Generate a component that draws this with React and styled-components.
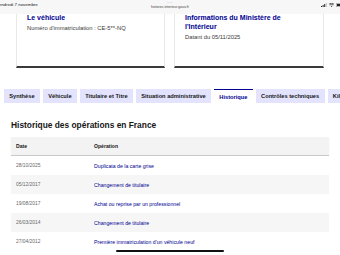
import React from "react";
import styled, { createGlobalStyle } from "styled-components";

const GlobalStyle = createGlobalStyle`
  html, body {
    margin: 0;
    padding: 0;
    background: #ffffff;
  }
  body {
    font-family: "Liberation Sans", Arial, sans-serif;
    color: #161616;
    width: 340px;
    height: 255px;
    overflow: hidden;
  }
`;

const Screen = styled.div`
  position: relative;
  width: 340px;
  height: 255px;
  overflow: hidden;
  background: #ffffff;
`;

const StatusBar = styled.div`
  display: grid;
  grid-template-columns: 1fr auto 1fr;
  align-items: start;
  height: 14px;
  background: #f7f7f7;
`;

const DateText = styled.span`
  font-size: 4.4px;
  margin: 2px 0 0 -4px;
  color: #222;
  white-space: nowrap;
`;

const Address = styled.div`
  display: flex;
  flex-direction: column;
  align-items: center;
  color: #444;
  line-height: 1;
`;

const Dots = styled.span`
  font-size: 5px;
  letter-spacing: 0.3px;
  color: #888;
`;

const Url = styled.span`
  font-size: 3.6px;
  margin-top: 1px;
`;

const StatusIcons = styled.div`
  display: flex;
  justify-content: flex-end;
  align-items: center;
  gap: 2px;
  margin: 3px -4px 0 0;
`;

const CardRow = styled.div`
  display: flex;
  gap: 9px;
  padding: 0 16px;
`;

const Card = styled.div`
  flex: 0 0 ${(p) => p.$w}px;
  height: 54px;
  padding: 0 10px;
  box-sizing: border-box;
  border-left: 1px solid #e8e8e8;
  border-right: 1px solid #e8e8e8;
  border-bottom: 2px solid #3a3a3a;
`;

const CardTitle = styled.div`
  font-size: 7px;
  font-weight: 700;
  line-height: 9px;
  color: #000091;
  margin-top: -1px;
`;

const CardDesc = styled.div`
  font-size: 5.8px;
  line-height: 7px;
  color: #3a3a3a;
  margin-top: ${(p) => p.$mt}px;
`;

const TabList = styled.div`
  display: flex;
  gap: 3px;
  padding-left: 4px;
  margin-top: 21px;
  white-space: nowrap;
  overflow: hidden;
`;

const Tab = styled.div`
  flex: 0 0 auto;
  height: 14px;
  box-sizing: border-box;
  padding: 0 5.3px;
  display: flex;
  align-items: center;
  font-size: 5.7px;
  font-weight: 700;
  color: ${(p) => (p.$active ? "#000091" : "#161616")};
  background: ${(p) => (p.$active ? "#ffffff" : "#e3e3fd")};
  border-top: ${(p) => (p.$active ? "1px solid #000091" : "none")};
`;

const Panel = styled.div`
  padding: 17px 11px 0 11px;
`;

const Heading = styled.h2`
  margin: 0 0 6px;
  font-size: 8.4px;
  line-height: 11px;
  font-weight: 700;
  color: #161616;
`;

const Table = styled.div`
  width: 318px;
  display: flex;
  flex-direction: column;
`;

const Row = styled.div`
  display: grid;
  grid-template-columns: 78px 1fr;
  align-items: center;
  height: 19px;
  padding-left: 5px;
  background: ${(p) => (p.$shade ? "#f6f6f6" : "#ffffff")};
`;

const HeadRow = styled(Row)`
  background: #f3f3f3;
  border-bottom: 1px solid #c9c9c9;
  box-shadow: 0 1px 1px rgba(0, 0, 0, 0.08);
  height: 18px;
`;

const HeadCell = styled.span`
  font-size: 5.1px;
  font-weight: 700;
  color: #161616;
`;

const DateCell = styled.span`
  font-size: 4.9px;
  color: #666666;
`;

const OpCell = styled.span`
  font-size: 5.2px;
  color: #000091;
`;

const HomeIndicator = styled.div`
  position: absolute;
  left: 116px;
  bottom: 3px;
  width: 108px;
  height: 2px;
  border-radius: 1px;
  background: #111;
`;

const tabs = [
  "Synthèse",
  "Véhicule",
  "Titulaire et Titre",
  "Situation administrative",
  "Historique",
  "Contrôles techniques",
  "Kilométrage",
];

const operations = [
  ["28/10/2025", "Duplicata de la carte grise"],
  ["05/12/2017", "Changement de titulaire"],
  ["19/08/2017", "Achat ou reprise par un professionnel"],
  ["26/03/2014", "Changement de titulaire"],
  ["27/04/2012", "Première immatriculation d'un véhicule neuf"],
];

function App() {
  return (
    <Screen>
      <GlobalStyle />
      <StatusBar>
        <DateText>Vendredi 7 novembre</DateText>
        <Address>
          <Dots>···</Dots>
          <Url>historec.interieur.gouv.fr</Url>
        </Address>
        <StatusIcons>
          <svg width="6" height="4" viewBox="0 0 6 4">
            <rect x="0" y="3" width="1" height="1" fill="#222" />
            <rect x="1.6" y="2" width="1" height="2" fill="#222" />
            <rect x="3.2" y="1" width="1" height="3" fill="#222" />
            <rect x="4.8" y="0" width="1" height="4" fill="#bbb" />
          </svg>
          <svg width="5" height="4" viewBox="0 0 10 8">
            <path d="M5 8 L3.4 6.2 A2.4 2.4 0 0 1 6.6 6.2 Z" fill="#222" />
            <path d="M1.6 4.2 A5 5 0 0 1 8.4 4.2" stroke="#222" strokeWidth="1.4" fill="none" />
            <path d="M0 2.4 A7.4 7.4 0 0 1 10 2.4" stroke="#222" strokeWidth="1.4" fill="none" />
          </svg>
          <svg width="8" height="4" viewBox="0 0 8 4">
            <rect x="0.3" y="0.3" width="7.4" height="3.4" rx="0.8" fill="none" stroke="#555" strokeWidth="0.5" />
            <rect x="1" y="1" width="5" height="2" fill="#222" />
          </svg>
        </StatusIcons>
      </StatusBar>

      <CardRow>
        <Card $w={149}>
          <CardTitle>Le véhicule</CardTitle>
          <CardDesc $mt={3}>Numéro d'immatriculation : CE-5**-NQ</CardDesc>
        </Card>
        <Card $w={150}>
          <CardTitle>
            Informations du Ministère de
            <br />
            l'Intérieur
          </CardTitle>
          <CardDesc $mt={3}>Datant du 05/11/2025</CardDesc>
        </Card>
      </CardRow>

      <TabList>
        {tabs.map((t) => (
          <Tab key={t} $active={t === "Historique"}>
            {t}
          </Tab>
        ))}
      </TabList>

      <Panel>
        <Heading>Historique des opérations en France</Heading>
        <Table>
          <HeadRow>
            <HeadCell>Date</HeadCell>
            <HeadCell>Opération</HeadCell>
          </HeadRow>
          {operations.map(([date, op], i) => (
            <Row key={i} $shade={i % 2 === 1}>
              <DateCell>{date}</DateCell>
              <OpCell>{op}</OpCell>
            </Row>
          ))}
        </Table>
      </Panel>

      <HomeIndicator />
    </Screen>
  );
}

export default App;
